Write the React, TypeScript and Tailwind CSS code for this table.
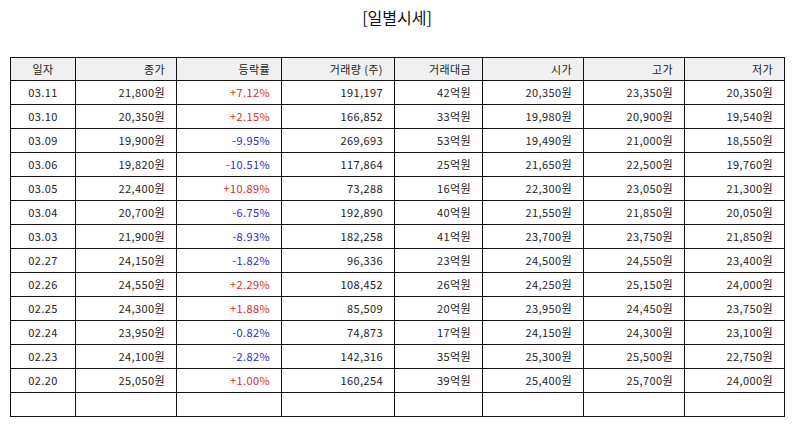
import React from 'react';

type Row = {
    date: string;
    close: string;
    rate: string;
    volume: string;
    amount: string;
    open: string;
    high: string;
    low: string;
};

const rows: Row[] = [
    { date: '03.11', close: '21,800원', rate: '+7.12%', volume: '191,197', amount: '42억원', open: '20,350원', high: '23,350원', low: '20,350원' },
    { date: '03.10', close: '20,350원', rate: '+2.15%', volume: '166,852', amount: '33억원', open: '19,980원', high: '20,900원', low: '19,540원' },
    { date: '03.09', close: '19,900원', rate: '-9.95%', volume: '269,693', amount: '53억원', open: '19,490원', high: '21,000원', low: '18,550원' },
    { date: '03.06', close: '19,820원', rate: '-10.51%', volume: '117,864', amount: '25억원', open: '21,650원', high: '22,500원', low: '19,760원' },
    { date: '03.05', close: '22,400원', rate: '+10.89%', volume: '73,288', amount: '16억원', open: '22,300원', high: '23,050원', low: '21,300원' },
    { date: '03.04', close: '20,700원', rate: '-6.75%', volume: '192,890', amount: '40억원', open: '21,550원', high: '21,850원', low: '20,050원' },
    { date: '03.03', close: '21,900원', rate: '-8.93%', volume: '182,258', amount: '41억원', open: '23,700원', high: '23,750원', low: '21,850원' },
    { date: '02.27', close: '24,150원', rate: '-1.82%', volume: '96,336', amount: '23억원', open: '24,500원', high: '24,550원', low: '23,400원' },
    { date: '02.26', close: '24,550원', rate: '+2.29%', volume: '108,452', amount: '26억원', open: '24,250원', high: '25,150원', low: '24,000원' },
    { date: '02.25', close: '24,300원', rate: '+1.88%', volume: '85,509', amount: '20억원', open: '23,950원', high: '24,450원', low: '23,750원' },
    { date: '02.24', close: '23,950원', rate: '-0.82%', volume: '74,873', amount: '17억원', open: '24,150원', high: '24,300원', low: '23,100원' },
    { date: '02.23', close: '24,100원', rate: '-2.82%', volume: '142,316', amount: '35억원', open: '25,300원', high: '25,500원', low: '22,750원' },
    { date: '02.20', close: '25,050원', rate: '+1.00%', volume: '160,254', amount: '39억원', open: '25,400원', high: '25,700원', low: '24,000원' },
];

const cell = 'border border-[#111] pl-[10px] pr-[11px] text-right';

export default function App() {
    return (
        <div
            className="w-[794px] h-[425px] bg-white text-[#222] px-[10px]"
            style={{ fontFamily: '"Noto Sans CJK KR", "Noto Sans", sans-serif' }}
        >
            <h1 className="h-[57px] pt-[5px] text-center text-[16px] leading-[24px] font-normal text-[#111]">[일별시세]</h1>
            <table className="w-[774px] table-fixed border-collapse text-[11px] tracking-[0.4px] leading-none">
                <colgroup>
                    <col className="w-[65px]" />
                    <col className="w-[101px]" />
                    <col className="w-[105px]" />
                    <col className="w-[113px]" />
                    <col className="w-[88px]" />
                    <col className="w-[101px]" />
                    <col className="w-[101px]" />
                    <col className="w-[100px]" />
                </colgroup>
                <thead>
                    <tr className="h-[23px] bg-[#f0f0f0]">
                        <th className="border border-[#111] font-normal text-center">일자</th>
                        <th className={`${cell} font-normal`}>종가</th>
                        <th className={`${cell} font-normal`}>등락률</th>
                        <th className={`${cell} font-normal`}>거래량 (주)</th>
                        <th className={`${cell} font-normal`}>거래대금</th>
                        <th className={`${cell} font-normal`}>시가</th>
                        <th className={`${cell} font-normal`}>고가</th>
                        <th className={`${cell} font-normal`}>저가</th>
                    </tr>
                </thead>
                <tbody>
                    {rows.map((r) => (
                        <tr key={r.date} className="h-[24px]">
                            <td className="border border-[#111] text-center">{r.date}</td>
                            <td className={cell}>{r.close}</td>
                            <td className={`${cell} ${r.rate.startsWith('+') ? 'text-[#e0282d]' : 'text-[#2b2bc8]'}`}>{r.rate}</td>
                            <td className={cell}>{r.volume}</td>
                            <td className={cell}>{r.amount}</td>
                            <td className={cell}>{r.open}</td>
                            <td className={cell}>{r.high}</td>
                            <td className={cell}>{r.low}</td>
                        </tr>
                    ))}
                    <tr className="h-[24px]">
                        <td className="border border-[#111]" />
                        <td className={cell} />
                        <td className={cell} />
                        <td className={cell} />
                        <td className={cell} />
                        <td className={cell} />
                        <td className={cell} />
                        <td className={cell} />
                    </tr>
                </tbody>
            </table>
        </div>
    );
}
